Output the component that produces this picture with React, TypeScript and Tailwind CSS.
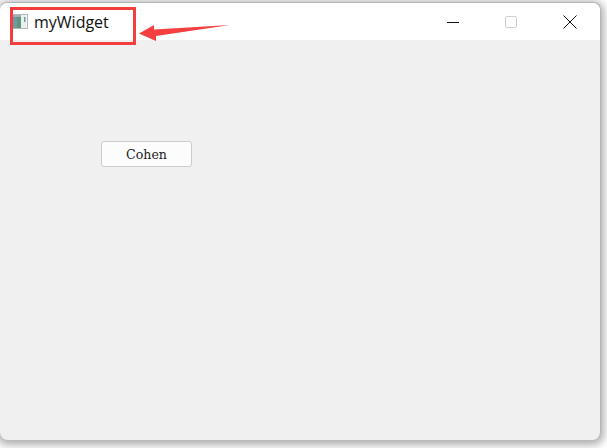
import React from "react";

const WidgetIcon = () => (
  <svg width="16" height="15" viewBox="0 0 16 15" className="shrink-0">
    <rect x="0.5" y="0.5" width="15" height="14" fill="#f4f6f5" stroke="#b4b8ba" />
    <rect x="1" y="3" width="4" height="11" fill="#6f9aa2" />
    <rect x="5" y="3" width="4" height="11" fill="#5f9580" />
    <rect x="1" y="1" width="8" height="2" fill="#a3acb6" />
    <rect x="9" y="1" width="5" height="13" fill="#e9efeb" />
    <rect x="12" y="3" width="1.5" height="5" fill="#7d97a2" />
  </svg>
);

const App = () => {
  return (
    <div className="relative w-[607px] h-[448px] overflow-hidden bg-white pt-[2px] font-['Liberation_Sans',sans-serif]">
      <div className="w-[601px] h-[438px] flex flex-col overflow-hidden rounded-t-[8px] rounded-b-[8px] border-t border-r border-[#b5b5b5] bg-[#f0f0f0] shadow-[0_2px_8px_3px_rgba(0,0,0,0.32)]">
        <div className="h-[37px] shrink-0 flex items-center bg-white pl-[12px]">
          <WidgetIcon />
          <span className="ml-[6px] text-[16px] leading-none text-[#111] font-['Open_Sans',sans-serif]">myWidget</span>
          <div className="ml-auto flex items-center">
            <svg width="14" height="14" viewBox="0 0 14 14" className="mr-[45px]">
              <path d="M1 7.5H13" stroke="#111" strokeWidth="1" />
            </svg>
            <div className="w-[12px] h-[12px] rounded-[2px] border border-[#cfcfcf] mr-[46px]" />
            <svg width="14" height="14" viewBox="0 0 14 14" className="mr-[23px]">
              <path d="M0.5 0.5L13.5 13.5M13.5 0.5L0.5 13.5" stroke="#111" strokeWidth="1" />
            </svg>
          </div>
        </div>
        <div className="flex-1 pt-[101px] pl-[101px]">
          <button className="w-[91px] h-[26px] pt-[2px] rounded-[3px] border border-[#cccccc] bg-[#fcfcfc] text-[12.6px] leading-none text-[#222] font-['DejaVu_Serif',serif]">
            Cohen
          </button>
        </div>
      </div>
      <div className="absolute left-[10px] top-[7px] w-[126px] h-[38px] border-[3px] border-[#f43d3d]" />
      <svg width="100" height="24" viewBox="0 0 100 24" className="absolute left-[135px] top-[22px]">
        <path d="M4 11.5L19 3L19 7.5L95 3L21 14L21 19Z" fill="#f63f3f" />
      </svg>
    </div>
  );
};

export default App;
